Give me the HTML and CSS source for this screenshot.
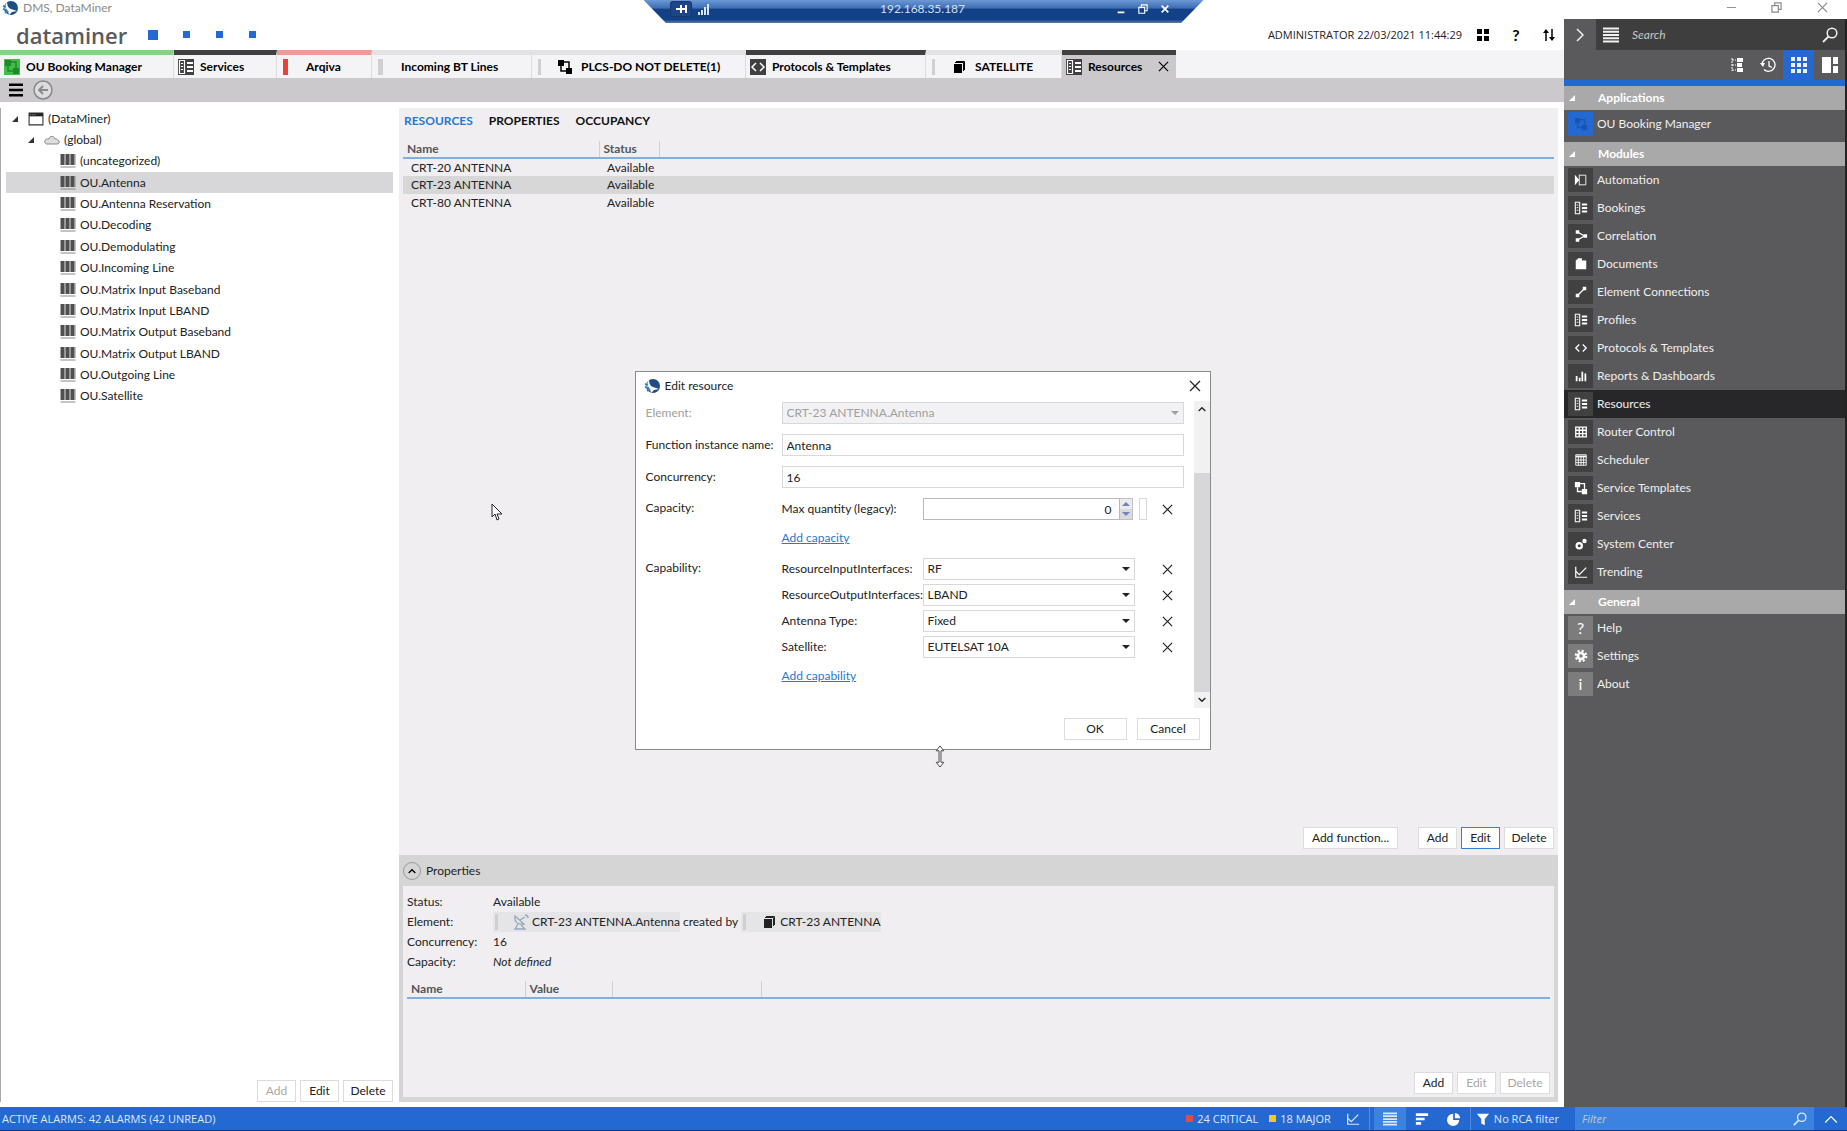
FILE: index.html
```
<!DOCTYPE html>
<html lang="en">
<head>
  <meta charset="UTF-8" />
  <title>DMS, DataMiner</title>
  <meta name="viewport" content="width=device-width, initial-scale=1.0">
  <link rel="stylesheet" href="styles.css">
</head>
<body>

  <!-- Icon set -->
  <svg class="sprite" aria-hidden="true">
    <symbol id="i-logo" viewBox="0 0 16 16"><circle cx="9" cy="8" r="7" fill="#1d4f86"/><path d="M5 1c0 4 1 7 4 8l6 2-5 1-3 3-1-4-4-2z" fill="#fff"/><path d="M1 6l3 1M1 9l4 1M3 13l3-2" stroke="#3b83c8" stroke-width="2"/></symbol>
    <symbol id="i-flow" viewBox="0 0 16 16"><path d="M1 1h6v6H1zM9 9h6v6H9z" fill="currentColor"/><path d="M7 3h5v6M4 7v5h5" fill="none" stroke="currentColor" stroke-width="1.5"/></symbol>
    <symbol id="i-list" viewBox="0 0 16 16"><path d="M1.500 1.500h5v13h-5z" fill="none" stroke="currentColor" stroke-width="1.200"/><path d="M3 4.500h2M3 7.500h2M3 10.500h2" stroke="currentColor"/><path d="M9 4h6M9 8h6M9 12h6" stroke="currentColor" stroke-width="2.200"/></symbol>
    <symbol id="i-code" viewBox="0 0 16 16"><path d="M6 4L2 8l4 4M10 4l4 4-4 4" fill="none" stroke="currentColor" stroke-width="1.500"/></symbol>
    <symbol id="i-cube" viewBox="0 0 16 16"><path d="M3 5h8v9H3z" fill="currentColor"/><path d="M4 3.500h8.500V12M5 2.500h8.500V11" fill="none" stroke="currentColor"/></symbol>
    <symbol id="i-close" viewBox="0 0 12 12"><path d="M1 1l10 10M11 1L1 11" stroke="currentColor" stroke-width="1.300"/></symbol>
    <symbol id="i-search" viewBox="0 0 16 16"><circle cx="10" cy="6" r="4.800" fill="none" stroke="currentColor" stroke-width="1.500"/><path d="M6.500 9.500L1 15" stroke="currentColor" stroke-width="1.800"/></symbol>
    <symbol id="i-lines" viewBox="0 0 16 16"><path d="M0 1.500h16M0 4.700h16M0 8h16M0 11.300h16M0 14.500h16" stroke="currentColor" stroke-width="2"/></symbol>
    <symbol id="i-bars" viewBox="0 0 15 14"><path d="M0 0h4v11H0zM5 0h4v11H5zM10 0h4v11h-4z" fill="#505050"/><path d="M4.500 0v11M9.500 0v11M14.500 0v11M0 13h15" stroke="#888"/></symbol>
    <symbol id="i-window" viewBox="0 0 15 13"><path d="M1 1h13v11H1z" fill="#fff" stroke="#333"/><path d="M1 1h13v3H1z" fill="#222"/><path d="M2 2.500h5" stroke="#999" stroke-dasharray="1 1"/></symbol>
    <symbol id="i-cloud" viewBox="0 0 16 10"><path d="M3 9h10a2 2 0 0 0 .500-4C13 4 12 3.600 11 4 10 1 6 0 4.800 4 2 3.500 0 5 1 7.500 1.300 8.500 2 9 3 9z" fill="#ddd" stroke="#888"/></symbol>
    <symbol id="i-trend" viewBox="0 0 16 16"><path d="M2 2v12h13M2 7l4 4 8-8" fill="none" stroke="currentColor" stroke-width="1.400"/></symbol>
    <symbol id="i-chevup" viewBox="0 0 12 8"><path d="M1 7l5-5 5 5" fill="none" stroke="currentColor" stroke-width="2"/></symbol>
    <symbol id="i-auto" viewBox="0 0 16 16"><path d="M1 2l5 6-5 6z" fill="currentColor"/><path d="M6 2.500h7.500v11H6M6 2v12" fill="none" stroke="currentColor"/></symbol>
    <symbol id="i-corr" viewBox="0 0 16 16"><path d="M2 1.500h4v4H2zM2 10.500h4v4H2zM11 6h4v4h-4z" fill="currentColor"/><path d="M5 4l7 4-7 4" fill="none" stroke="currentColor" stroke-width="1.500"/></symbol>
    <symbol id="i-doc" viewBox="0 0 16 16"><path d="M2 4l3-2.500h4V4h5v10H2z" fill="currentColor"/></symbol>
    <symbol id="i-conn" viewBox="0 0 16 16"><path d="M10 2h4v4h-4zM2 10h4v4H2z" fill="currentColor"/><path d="M12 4l-8 8" stroke="currentColor" stroke-width="1.500"/></symbol>
    <symbol id="i-report" viewBox="0 0 16 16"><path d="M2 8h2v6H2zM5.500 10h2v4h-2zM8.500 3h2v11h-2zM12 5h2v9h-2z" fill="currentColor"/></symbol>
    <symbol id="i-router" viewBox="0 0 16 16"><path d="M2 2.500h12v11H2zM2 6h12M2 9.800h12M6 2v12M10 2v12" fill="none" stroke="currentColor" stroke-width="1.500"/></symbol>
    <symbol id="i-sched" viewBox="0 0 16 16"><path d="M2 2h12v12H2z" fill="none" stroke="currentColor"/><path d="M2 4h12" stroke="currentColor" stroke-width="2"/><path d="M2 8h12M2 11h12M5 4v10M8 4v10M11 4v10" stroke="currentColor"/></symbol>
    <symbol id="i-gears" viewBox="0 0 16 16"><circle cx="6" cy="10" r="3" fill="none" stroke="currentColor" stroke-width="2.500"/><circle cx="12" cy="4.500" r="2.500" fill="currentColor"/></symbol>
    <symbol id="i-gear" viewBox="0 0 16 16"><circle cx="8" cy="8" r="3.500" fill="none" stroke="currentColor" stroke-width="3"/><circle cx="8" cy="8" r="6" fill="none" stroke="currentColor" stroke-width="2.500" stroke-dasharray="2.400 2.310"/></symbol>
    <symbol id="i-grid" viewBox="0 0 16 16"><path d="M0 0h4v4H0zM6 0h4v4H6zM12 0h4v4h-4zM0 6h4v4H0zM6 6h4v4H6zM12 6h4v4h-4zM0 12h4v4H0zM6 12h4v4H6zM12 12h4v4h-4z" fill="currentColor"/></symbol>
    <symbol id="i-dish" viewBox="0 0 16 16"><path d="M2 2c-1 6 3 9 9 8L2 2zM7 6l5-3M5 10l-3 5h10l-4-4M12 1c2 0 3 1 3 3" fill="none" stroke="#8fa9c0" stroke-width="1.300"/></symbol>
    <symbol id="i-restore" viewBox="0 0 12 12"><path d="M1 4h7v7H1zM4 4V1h7v7H8" fill="none" stroke="currentColor" stroke-width="1.300"/></symbol>
  </svg>

  <!-- Remote desktop bar -->
  <div class="rdp">
    <svg class="rdp-pin" viewBox="0 0 22 16"><rect x="0.500" y="0.500" width="21" height="15" rx="2" fill="#1c4486" stroke="#16386f"/><path d="M6 8h5M11 4v8M11 8h5M16 4v8" stroke="#fff" stroke-width="2"/></svg>
    <svg class="rdp-signal" viewBox="0 0 12 12"><path d="M1 9v3M4 7v5M7 4v8M10 1v11" stroke="#dbe6f7" stroke-width="2"/></svg>
    <span class="rdp-host">192.168.35.187</span>
    <button aria-label="Minimize"><svg viewBox="0 0 12 12"><path d="M2 10h8" stroke="currentColor" stroke-width="2"/></svg></button>
    <button aria-label="Restore"><svg viewBox="0 0 12 12"><use href="#i-restore"/></svg></button>
    <button aria-label="Close"><svg viewBox="0 0 12 12"><path d="M2 2l8 8M10 2l-8 8" stroke="currentColor" stroke-width="2"/></svg></button>
  </div>

  <div class="titlebar">
    <svg class="logo"><use href="#i-logo"/></svg>
    <span class="title">DMS, DataMiner</span>
    <button aria-label="Minimize"><svg viewBox="0 0 12 12"><path d="M1 6h10" stroke="currentColor"/></svg></button>
    <button aria-label="Restore"><svg viewBox="0 0 12 12"><use href="#i-restore"/></svg></button>
    <button aria-label="Close"><svg><use href="#i-close"/></svg></button>
  </div>

  <div class="workspace">
    <main class="main">

      <header class="brand">
        <span class="brand-name">dataminer</span>
        <i class="dot big"></i><i class="dot"></i><i class="dot"></i><i class="dot"></i>
        <span class="user">ADMINISTRATOR 22/03/2021 11:44:29</span>
        <svg class="hicon" viewBox="0 0 14 14"><path d="M1 1h5v5H1zM8 1h5v5H8zM1 8h5v5H1zM8 8h5v5H8z" fill="#000"/></svg>
        <button class="help" aria-label="Help">?</button>
        <svg class="hicon" viewBox="0 0 14 14"><path d="M4 13V3M10 1v10" stroke="#000" stroke-width="1.500"/><path d="M1 5l3-4 3 4zM7 9l3 4 3-4z"/></svg>
      </header>

      <nav class="tabs">
        <a href="#" class="tab green"><svg class="tab-icon app"><use href="#i-flow"/></svg>OU Booking Manager</a>
        <a href="#" class="tab dark"><svg class="tab-icon box"><use href="#i-list"/></svg>Services</a>
        <a href="#" class="tab pink"><i class="sev red"></i>Arqiva</a>
        <a href="#" class="tab"><i class="sev"></i>Incoming BT Lines</a>
        <a href="#" class="tab"><i class="sev slim"></i><svg class="tab-icon"><use href="#i-flow"/></svg>PLCS-DO NOT DELETE(1)</a>
        <a href="#" class="tab dark"><svg class="tab-icon box"><use href="#i-code"/></svg>Protocols &amp; Templates</a>
        <a href="#" class="tab"><i class="sev slim"></i><svg class="tab-icon"><use href="#i-cube"/></svg>SATELLITE</a>
        <a href="#" class="tab dark active"><svg class="tab-icon box"><use href="#i-list"/></svg>Resources<svg class="tab-close"><use href="#i-close"/></svg></a>
      </nav>

      <div class="toolbar">
        <button aria-label="Menu"><svg class="burger" viewBox="0 0 16 16"><path d="M0 2h16M0 8h16M0 14h16" stroke="#000" stroke-width="3"/></svg></button>
        <button aria-label="Back"><svg class="back" viewBox="0 0 20 20"><circle cx="10" cy="10" r="9" fill="#dcdbdd" stroke="#888" stroke-width="1.500"/><path d="M15 10H6M10 6l-4 4 4 4" fill="none" stroke="#888" stroke-width="1.800"/></svg></button>
      </div>

      <div class="panes">
        <section class="tree-pane">
          <ul class="tree">
            <li class="lvl0"><i class="twist"></i><svg><use href="#i-window"/></svg>(DataMiner)</li>
            <li class="lvl1"><i class="twist"></i><svg><use href="#i-cloud"/></svg>(global)</li>
            <li><svg><use href="#i-bars"/></svg>(uncategorized)</li>
            <li class="selected"><svg><use href="#i-bars"/></svg>OU.Antenna</li>
            <li><svg><use href="#i-bars"/></svg>OU.Antenna Reservation</li>
            <li><svg><use href="#i-bars"/></svg>OU.Decoding</li>
            <li><svg><use href="#i-bars"/></svg>OU.Demodulating</li>
            <li><svg><use href="#i-bars"/></svg>OU.Incoming Line</li>
            <li><svg><use href="#i-bars"/></svg>OU.Matrix Input Baseband</li>
            <li><svg><use href="#i-bars"/></svg>OU.Matrix Input LBAND</li>
            <li><svg><use href="#i-bars"/></svg>OU.Matrix Output Baseband</li>
            <li><svg><use href="#i-bars"/></svg>OU.Matrix Output LBAND</li>
            <li><svg><use href="#i-bars"/></svg>OU.Outgoing Line</li>
            <li><svg><use href="#i-bars"/></svg>OU.Satellite</li>
          </ul>
          <div class="actions">
            <button class="btn short" disabled>Add</button>
            <button class="btn short">Edit</button>
            <button class="btn">Delete</button>
          </div>
        </section>

        <section class="detail">
          <nav class="subtabs">
            <a href="#" class="on">RESOURCES</a>
            <a href="#">PROPERTIES</a>
            <a href="#">OCCUPANCY</a>
          </nav>
          <table class="grid resources">
            <colgroup><col class="c-name"><col class="c-status"><col></colgroup>
            <thead><tr><th>Name</th><th>Status</th><th></th></tr></thead>
            <tbody>
              <tr><td>CRT-20 ANTENNA</td><td>Available</td><td></td></tr>
              <tr class="selected"><td>CRT-23 ANTENNA</td><td>Available</td><td></td></tr>
              <tr><td>CRT-80 ANTENNA</td><td>Available</td><td></td></tr>
            </tbody>
          </table>
          <div class="actions detail-actions">
            <button class="btn wide">Add function...</button>
            <button class="btn short">Add</button>
            <button class="btn short focus">Edit</button>
            <button class="btn">Delete</button>
          </div>

          <div class="props">
            <div class="props-head">
              <button class="round" aria-label="Collapse"><svg viewBox="0 0 12 8"><use href="#i-chevup"/></svg></button>
              Properties
            </div>
            <div class="props-body">
              <dl class="facts">
                <dt>Status:</dt><dd>Available</dd>
                <dt>Element:</dt>
                <dd>
                  <span class="chip"><i></i><svg><use href="#i-dish"/></svg>CRT-23 ANTENNA.Antenna</span>
                  created by
                  <span class="chip"><i></i><svg><use href="#i-cube"/></svg>CRT-23 ANTENNA</span>
                </dd>
                <dt>Concurrency:</dt><dd>16</dd>
                <dt>Capacity:</dt><dd><em>Not defined</em></dd>
              </dl>
              <table class="grid values">
                <colgroup><col class="c-pname"><col class="c-pvalue"><col class="c-pextra"><col></colgroup>
                <thead><tr><th>Name</th><th>Value</th><th></th><th></th></tr></thead>
              </table>
              <div class="actions">
                <button class="btn short">Add</button>
                <button class="btn short" disabled>Edit</button>
                <button class="btn" disabled>Delete</button>
              </div>
            </div>
          </div>
        </section>
      </div>
    </main>

    <!-- Right hand navigation -->
    <aside class="side">
      <div class="side-search">
        <button aria-label="Collapse"><svg viewBox="0 0 8 16"><path d="M1 2l6 6-6 6" fill="none" stroke="currentColor" stroke-width="1.500"/></svg></button>
        <div class="search-box">
          <svg><use href="#i-lines"/></svg>
          <input type="search" placeholder="Search" aria-label="Search">
          <svg><use href="#i-search"/></svg>
        </div>
      </div>
      <div class="side-modes">
        <button aria-label="Surveyor"><svg viewBox="0 0 16 16"><path d="M8 1h6v4H8zM8 6h5v4H8zM8 11h6v4H8z" fill="#fff"/><path d="M3 1v13M3 3h4M3 8h4M3 13h4" stroke="#fff" stroke-dasharray="2 1"/></svg></button>
        <button aria-label="Recent"><svg viewBox="0 0 16 16"><path d="M2 8a6.500 6.500 0 1 1 2 4.500M9 4v5l3 1.500" fill="none" stroke="#fff" stroke-width="1.300"/><path d="M0 6h5l-2 4z" fill="#fff"/></svg></button>
        <button class="on" aria-label="Apps"><svg><use href="#i-grid"/></svg></button>
        <button aria-label="Workspace"><svg viewBox="0 0 16 16"><path d="M0 0h9v16H0zM11 0h5v7h-5zM11 9h5v7h-5z" fill="#fff"/></svg></button>
      </div>
      <h2>Applications</h2>
      <ul>
        <li><i class="tile blue"><svg><use href="#i-flow"/></svg></i>OU Booking Manager</li>
      </ul>
      <h2>Modules</h2>
      <ul>
        <li><i class="tile"><svg><use href="#i-auto"/></svg></i>Automation</li>
        <li><i class="tile"><svg><use href="#i-list"/></svg></i>Bookings</li>
        <li><i class="tile"><svg><use href="#i-corr"/></svg></i>Correlation</li>
        <li><i class="tile"><svg><use href="#i-doc"/></svg></i>Documents</li>
        <li><i class="tile"><svg><use href="#i-conn"/></svg></i>Element Connections</li>
        <li><i class="tile"><svg><use href="#i-list"/></svg></i>Profiles</li>
        <li><i class="tile"><svg><use href="#i-code"/></svg></i>Protocols &amp; Templates</li>
        <li><i class="tile"><svg><use href="#i-report"/></svg></i>Reports &amp; Dashboards</li>
        <li class="selected"><i class="tile"><svg><use href="#i-list"/></svg></i>Resources</li>
        <li><i class="tile"><svg><use href="#i-router"/></svg></i>Router Control</li>
        <li><i class="tile"><svg><use href="#i-sched"/></svg></i>Scheduler</li>
        <li><i class="tile"><svg><use href="#i-flow"/></svg></i>Service Templates</li>
        <li><i class="tile"><svg><use href="#i-list"/></svg></i>Services</li>
        <li><i class="tile"><svg><use href="#i-gears"/></svg></i>System Center</li>
        <li><i class="tile"><svg><use href="#i-trend"/></svg></i>Trending</li>
      </ul>
      <h2>General</h2>
      <ul>
        <li><i class="tile light">?</i>Help</li>
        <li><i class="tile light"><svg><use href="#i-gear"/></svg></i>Settings</li>
        <li><i class="tile light">i</i>About</li>
      </ul>
    </aside>
  </div>

  <footer class="status">
    <span class="alarms">ACTIVE ALARMS: 42 ALARMS (42 UNREAD)</span>
    <span class="count"><i class="crit"></i>24 CRITICAL</span>
    <span class="count"><i class="major"></i>18 MAJOR</span>
    <button class="view last" aria-label="Trend"><svg><use href="#i-trend"/></svg></button>
    <button class="view on" aria-label="List"><svg><use href="#i-lines"/></svg></button>
    <button class="view" aria-label="Sort"><svg viewBox="0 0 16 16"><path d="M1 3h14M1 8h10M1 13h6" stroke="#fff" stroke-width="3"/></svg></button>
    <button class="view" aria-label="Chart"><svg viewBox="0 0 16 16"><path d="M7 2v7h7a7 7 0 1 1-7-7z" fill="#fff"/><path d="M9 1a6 6 0 0 1 6 6H9z" fill="#fff"/></svg></button>
    <button class="rca"><svg viewBox="0 0 16 16"><path d="M1 2h14l-5 6v7l-4-2V8z" fill="#fff"/></svg>No RCA filter</button>
    <div class="filter">
      <input type="text" placeholder="Filter" aria-label="Filter">
      <svg><use href="#i-search"/></svg>
    </div>
    <button class="expand" aria-label="Expand"><svg viewBox="0 0 12 8"><path d="M1 7l5-5 5 5" fill="none" stroke="#fff"/></svg></button>
  </footer>

  <!-- Dialog -->
  <div class="dialog" role="dialog" aria-labelledby="dlg-title">
    <div class="dialog-head">
      <svg class="logo"><use href="#i-logo"/></svg>
      <span id="dlg-title">Edit resource</span>
      <button aria-label="Close"><svg><use href="#i-close"/></svg></button>
    </div>
    <div class="dialog-body">
      <form class="form">
        <div class="field off">
          <label for="element">Element:</label>
          <span class="select"><select id="element" disabled><option>CRT-23 ANTENNA.Antenna</option></select></span>
        </div>
        <div class="field">
          <label for="fname">Function instance name:</label>
          <input id="fname" type="text" value="Antenna">
        </div>
        <div class="field">
          <label for="conc">Concurrency:</label>
          <input id="conc" type="text" value="16">
        </div>
        <div class="field group">
          <span class="legend">Capacity:</span>
          <div class="rows">
            <div class="row">
              <label for="maxq">Max quantity (legacy):</label>
              <div class="quantity">
                <input id="maxq" type="number" value="0">
                <span class="spin"><button type="button" aria-label="Up"></button><button type="button" aria-label="Down"></button></span>
                <i class="unit"></i>
              </div>
              <button type="button" class="remove" aria-label="Remove"><svg><use href="#i-close"/></svg></button>
            </div>
            <a href="#">Add capacity</a>
          </div>
        </div>
        <div class="field group">
          <span class="legend">Capability:</span>
          <div class="rows">
            <div class="row">
              <label for="rin">ResourceInputInterfaces:</label>
              <span class="select"><select id="rin"><option>RF</option></select></span>
              <button type="button" class="remove" aria-label="Remove"><svg><use href="#i-close"/></svg></button>
            </div>
            <div class="row">
              <label for="rout">ResourceOutputInterfaces:</label>
              <span class="select"><select id="rout"><option>LBAND</option></select></span>
              <button type="button" class="remove" aria-label="Remove"><svg><use href="#i-close"/></svg></button>
            </div>
            <div class="row">
              <label for="atype">Antenna Type:</label>
              <span class="select"><select id="atype"><option>Fixed</option></select></span>
              <button type="button" class="remove" aria-label="Remove"><svg><use href="#i-close"/></svg></button>
            </div>
            <div class="row">
              <label for="sat">Satellite:</label>
              <span class="select"><select id="sat"><option>EUTELSAT 10A</option></select></span>
              <button type="button" class="remove" aria-label="Remove"><svg><use href="#i-close"/></svg></button>
            </div>
            <a href="#">Add capability</a>
          </div>
        </div>
      </form>
      <div class="scrollbar">
        <svg viewBox="0 0 12 8"><use href="#i-chevup"/></svg>
        <i class="thumb"></i>
        <svg class="down" viewBox="0 0 12 8"><use href="#i-chevup"/></svg>
      </div>
    </div>
    <div class="dialog-foot">
      <button class="btn">OK</button>
      <button class="btn">Cancel</button>
    </div>
  </div>

  <svg class="cursor resize" viewBox="0 0 10 24"><path d="M5 1l4 5H6v12h3l-4 5-4-5h3V6H1z" fill="#fff" stroke="#444"/></svg>
  <svg class="cursor arrow" viewBox="0 0 12 18"><path d="M1 1v13l3-3 2 6 2-1-2-5h5z" fill="#fff" stroke="#222"/></svg>

</body>
</html>
```
FILE: styles.css
```
* {
  box-sizing: border-box;
}

body {
  margin: 0;
  min-height: 100vh;
  display: flex;
  flex-direction: column;
  position: relative;
  background: #fff;
  color: #222;
  font: 12px/16px Lato, "Open Sans", sans-serif;
}

button, input, select {
  font: inherit;
  color: inherit;
  margin: 0;
}

button {
  border: 0;
  padding: 0;
  background: none;
  display: flex;
  align-items: center;
  justify-content: center;
}

ul, dl, dd, h2 {
  margin: 0;
  padding: 0;
  list-style: none;
}

a {
  color: inherit;
  text-decoration: none;
}

svg {
  width: 16px;
  height: 16px;
  flex: none;
}

.sprite {
  position: absolute;
  width: 0;
  height: 0;
}

/* remote desktop bar */
.rdp {
  position: absolute;
  top: 0;
  left: 50%;
  transform: translateX(-50%);
  width: 560px;
  height: 23px;
  padding: 0 28px 6px 26px;
  display: flex;
  align-items: center;
  color: #fff;
  background: linear-gradient(#6c98d4, #3d6db4 35%, #134188 40%, #134188 85%, #5b7cab);
  clip-path: polygon(0 0, 100% 0, 96% 100%, 4% 100%);
}

.rdp-pin {
  width: 22px;
}

.rdp-signal {
  width: 12px;
  height: 12px;
  margin-left: 6px;
}

.rdp-host {
  flex: 1;
  padding-left: 26px;
  text-align: center;
  color: #d3e0f3;
}

.rdp button {
  width: 22px;
}

.rdp button svg {
  width: 10px;
  height: 10px;
}

/* window title */
.titlebar {
  height: 19px;
  padding: 0 12px 4px 2px;
  display: flex;
  align-items: center;
  color: #8a8a8a;
}

.titlebar .title {
  flex: 1;
  margin-left: 5px;
}

.titlebar button {
  width: 45px;
}

.titlebar button:last-child {
  width: 36px;
  justify-content: flex-end;
  padding-right: 7px;
}

.titlebar button svg {
  width: 11px;
  height: 11px;
}

.workspace {
  flex: 1;
  display: flex;
}

.main {
  flex: 1;
  min-width: 0;
  display: flex;
  flex-direction: column;
}

.brand {
  height: 31px;
  padding: 0 8px 0 16px;
  display: flex;
  align-items: center;
}

.brand-name {
  width: 132px;
  font: 600 22px/24px "Open Sans", sans-serif;
  color: #5a5a5c;
}

.dot {
  width: 7px;
  height: 7px;
  margin-right: 26px;
  background: #2469d1;
}

.dot.big {
  width: 10px;
  height: 10px;
  margin-right: 25px;
}

.user {
  margin-left: auto;
  margin-right: 14px;
  font: 11px/16px "Open Sans", sans-serif;
}

.hicon {
  width: 14px;
  height: 14px;
}

.help {
  width: 52px;
  font-size: 16px;
  font-weight: 700;
  color: #000;
}

/* tabs */
.tabs {
  height: 28px;
  display: grid;
  grid-template-columns: 174px 103px 95px 160px 214px 180px 136px 114px;
  background: #f4f4f6;
}

.tab {
  display: flex;
  align-items: center;
  padding-left: 4px;
  border-top: 5px solid #e3e2e4;
  border-right: 1px solid #dcdcde;
  font-weight: 700;
  color: #000;
  white-space: nowrap;
}

.tab.green { border-top-color: #86d283; }
.tab.dark { border-top-color: #404041; }
.tab.pink { border-top-color: #f09a98; }

.tab.active {
  background: #cbc9cc;
  border-right: 0;
}

.tab-icon {
  margin-right: 6px;
}

.tab-icon.box {
  background: #404041;
  color: #fff;
}

.tab-icon.app {
  background: #42bd48;
  color: #1f8a2c;
}

.tab-close {
  width: 11px;
  height: 11px;
  margin-left: auto;
  margin-right: 7px;
}

.sev {
  width: 5px;
  height: 16px;
  margin: 0 18px 0 2px;
  background: #d0d0d2;
}

.sev.slim {
  width: 3px;
  margin-right: 16px;
}

.sev.slim + .tab-icon {
  margin-right: 8px;
}

.sev.red {
  background: #e8403a;
}

.toolbar {
  height: 24px;
  padding-left: 8px;
  display: flex;
  align-items: center;
  gap: 9px;
  background: #cbc9cc;
}

.burger {
  width: 16px;
  height: 14px;
}

.back {
  width: 20px;
  height: 20px;
}

/* panes */
.panes {
  flex: 1;
  display: grid;
  grid-template-columns: 393px 1fr;
  gap: 6px;
  padding: 6px 6px 5px 0;
}

.tree-pane {
  display: flex;
  flex-direction: column;
  justify-content: space-between;
  border-left: 1px solid #aaa;
}

.tree {
  height: 299px;
  margin-left: 5px;
  display: flex;
  flex-direction: column;
}

.tree li {
  flex: 1;
  display: flex;
  align-items: center;
  gap: 4px;
  padding-left: 54px;
}

.tree .lvl0 {
  padding-left: 6px;
}

.tree .lvl1 {
  padding-left: 22px;
}

.tree .selected {
  background: #d7d7d9;
}

.tree svg {
  height: 14px;
}

.twist {
  border-left: 6px solid transparent;
  border-bottom: 6px solid #333;
  margin-right: 6px;
}

.actions {
  display: flex;
  justify-content: flex-end;
  gap: 4px;
}

.btn {
  min-width: 50px;
  height: 22px;
  border: 1px solid #dcdcde;
  background: #fff;
}

.btn.short {
  min-width: 39px;
}

.btn.wide {
  width: 95px;
  margin-right: 16px;
}

.btn.focus {
  border-color: #2f80d8;
}

.btn:disabled {
  color: #a8a8a8;
}

.detail {
  display: flex;
  flex-direction: column;
  background: #f0eef1;
}

.subtabs {
  display: flex;
  gap: 16px;
  padding: 5px 5px 9px;
  font-weight: 700;
  color: #111;
}

.subtabs .on {
  color: #2878d0;
}

/* data grids */
.grid {
  table-layout: fixed;
  border-collapse: collapse;
  text-align: left;
}

.grid th {
  height: 17px;
  padding: 0 4px;
  border-right: 1px solid #d0d0d2;
  border-bottom: 2px solid #7fb0e0;
  font-weight: 700;
  line-height: 14px;
  color: #555;
}

.grid th:last-child {
  border-right: 0;
}

.grid td {
  height: 18px;
  padding: 0 8px;
}

.resources {
  width: calc(100% - 8px);
  margin: 3px 4px 0;
}

.resources .selected {
  background: #d7d7d8;
}

.c-name { width: 196px; }
.c-status { width: 60px; }
.c-pname { width: 118px; }
.c-pvalue { width: 87px; }
.c-pextra { width: 149px; }

.detail-actions {
  margin-top: auto;
  padding: 0 4px 6px;
}

.props {
  display: flex;
  flex-direction: column;
  height: 247px;
  padding: 0 4px 5px;
  background: #d5d5d5;
}

.props-head {
  height: 31px;
  display: flex;
  align-items: center;
  gap: 5px;
}

.round {
  width: 18px;
  height: 18px;
  border: 1px solid #999;
  border-radius: 50%;
  color: #000;
}

.round svg {
  width: 8px;
  height: 6px;
}

.props-body {
  flex: 1;
  display: flex;
  flex-direction: column;
  padding: 6px 4px 3px;
  background: #f0eef1;
}

.facts {
  display: grid;
  grid-template-columns: 86px 1fr;
  grid-auto-rows: 20px;
  align-items: center;
}

.facts dd {
  display: flex;
  align-items: center;
  gap: 3px;
}

.chip {
  display: flex;
  align-items: center;
  gap: 3px;
  height: 20px;
  background: #e5e4e6;
}

.chip i {
  width: 3px;
  height: 16px;
  margin: 0 12px 0 2px;
  background: #cfcfd1;
}

.values {
  width: 100%;
  margin-top: 9px;
}

.props-body .actions {
  margin-top: auto;
}

/* right side */
.side {
  width: 283px;
  background: #5a595b;
  color: #f0f0f0;
  border-right: 2px solid #222;
}

.side-search {
  display: flex;
  height: 31px;
}

.side-search button {
  width: 32px;
}

.side-search button svg {
  width: 8px;
}

.search-box {
  flex: 1;
  display: flex;
  align-items: center;
  padding: 0 7px;
  background: #3e3e3e;
}

.search-box input,
.filter input {
  flex: 1;
  min-width: 0;
  padding: 0 13px;
  border: 0;
  background: none;
  font-style: italic;
}

.search-box input::placeholder,
.filter input::placeholder {
  color: #c6c6c6;
}

.side-modes {
  display: flex;
  justify-content: flex-end;
  height: 36px;
  border-bottom: 6px solid #2469d1;
}

.side-modes button {
  width: 31px;
}

.side-modes .on {
  background: #2469d1;
}

.side h2 {
  height: 24px;
  padding-left: 5px;
  display: flex;
  align-items: center;
  gap: 23px;
  font-size: 12px;
  font-weight: 700;
  color: #fff;
  background: #a9a9a9;
}

.side h2::before {
  content: "";
  border-left: 6px solid transparent;
  border-bottom: 6px solid #fff;
}

.side ul {
  padding-bottom: 4px;
}

.side li {
  height: 28px;
  padding-left: 4px;
  display: flex;
  align-items: center;
  gap: 4px;
}

.side li.selected {
  background: #272628;
}

.tile {
  width: 25px;
  height: 24px;
  display: flex;
  align-items: center;
  justify-content: center;
  background: #414141;
  color: #fff;
  font-size: 16px;
  font-style: normal;
}

.tile svg {
  width: 14px;
  height: 14px;
}

.tile.blue {
  background: #2469d1;
  color: #1a53b0;
}

.tile.light {
  background: #7c7c7c;
}

/* status bar */
.status {
  display: flex;
  align-items: center;
  height: 24px;
  padding-left: 2px;
  background: #2469d1;
  border-bottom: 1px solid #123a78;
  color: #dbe8fb;
  font: 11px/16px "Open Sans", sans-serif;
}

.status svg {
  width: 14px;
  height: 14px;
}

.alarms {
  flex: 1;
}

.count {
  display: flex;
  align-items: center;
  gap: 4px;
  margin-right: 11px;
}

.count + .view {
  margin-left: -4px;
}

.count i {
  width: 7px;
  height: 7px;
}

.crit { background: #e8484a; }
.major { background: #f2cc1c; }

.view {
  width: 32px;
  height: 23px;
}

.view.last {
  border-right: 1px solid #4f8be0;
  margin-right: 4px;
}

.view.on {
  background: #3b83df;
}

.rca {
  height: 23px;
  gap: 4px;
  margin-right: 16px;
  padding-left: 5px;
  border-left: 1px solid #4f8be0;
}

.filter {
  width: 239px;
  height: 23px;
  display: flex;
  align-items: center;
  padding-right: 7px;
  background: #3b83df;
}

.filter input {
  padding: 0 7px;
}

.expand {
  width: 33px;
}

/* dialog */
.dialog {
  position: absolute;
  top: 371px;
  left: 50%;
  width: 576px;
  margin-left: -289px;
  background: #fff;
  border: 1px solid #8a8a8a;
}

.dialog-head {
  height: 29px;
  padding: 0 9px 1px 8px;
  display: flex;
  align-items: center;
}

.dialog-head span {
  flex: 1;
  margin-left: 5px;
}

.dialog-head button svg {
  width: 12px;
  height: 12px;
}

.dialog-body {
  display: flex;
  height: 307px;
}

.form {
  flex: 1;
  padding: 1px 10px 0;
}

.field {
  display: grid;
  grid-template-columns: 136px 1fr;
  align-items: center;
  margin-bottom: 10px;
}

.field > label {
  white-space: nowrap;
}

.field.group {
  align-items: start;
}

.legend {
  line-height: 20px;
}

.off {
  color: #a0a0a0;
}

.form input,
.form select {
  width: 100%;
  height: 22px;
  padding: 0 4px;
  border: 1px solid #d8d8da;
  border-radius: 0;
  background: #fff;
  appearance: none;
}

.form select:disabled {
  background: #f2f1f3;
  opacity: 1;
}

.select {
  position: relative;
  display: flex;
}

.select::after {
  content: "";
  position: absolute;
  right: 5px;
  top: 9px;
  border: 4px solid transparent;
  border-top: 4px solid currentColor;
}

.rows {
  display: flex;
  flex-direction: column;
  gap: 4px;
}

.rows > a {
  margin-top: 4px;
  line-height: 20px;
  color: #2878d0;
  text-decoration: underline;
}

.row {
  display: grid;
  grid-template-columns: 141px 212px 1fr;
  align-items: center;
}

.row label {
  white-space: nowrap;
}

.remove {
  justify-self: end;
  width: 32px;
}

.remove svg {
  width: 11px;
  height: 11px;
}

.quantity {
  display: flex;
}

.form .quantity input {
  flex: 1;
  min-width: 0;
  padding-right: 7px;
  border-color: #b8b8ba;
  text-align: right;
  appearance: textfield;
}

.quantity input::-webkit-inner-spin-button {
  appearance: none;
  margin: 0;
}

.spin {
  width: 13px;
  display: flex;
  flex-direction: column;
  border: 1px solid #c0c0c2;
  border-left: 0;
  background: #ececee;
}

.spin button {
  flex: 1;
}

.spin button::before {
  content: "";
  border: 4px solid transparent;
  border-top: 0;
  border-bottom: 4px solid #7282bd;
}

.spin button + button {
  background: #dadadc;
}

.spin button + button::before {
  border-bottom: 0;
  border-top: 4px solid #7282bd;
}

.unit {
  width: 8px;
  margin: 0 -12px 0 6px;
  border: 1px solid #d8d8da;
}

.scrollbar {
  width: 16px;
  display: flex;
  flex-direction: column;
  align-items: center;
  padding: 4px 0;
  background: #f1f1f1;
}

.scrollbar svg {
  width: 8px;
  height: 8px;
}

.scrollbar .down {
  transform: rotate(180deg);
}

.thumb {
  width: 100%;
  flex: 1;
  margin: 60px 0 4px;
  background: #d7d7d9;
}

.dialog-foot {
  display: flex;
  justify-content: flex-end;
  gap: 10px;
  padding: 10px 10px 9px;
}

.dialog-foot .btn {
  width: 63px;
}

/* mouse pointers */
.cursor {
  position: absolute;
}

.resize {
  left: calc(50% + 11px);
  top: 745px;
  width: 10px;
  height: 23px;
}

.arrow {
  left: 491px;
  top: 503px;
  width: 12px;
  height: 18px;
}
```
